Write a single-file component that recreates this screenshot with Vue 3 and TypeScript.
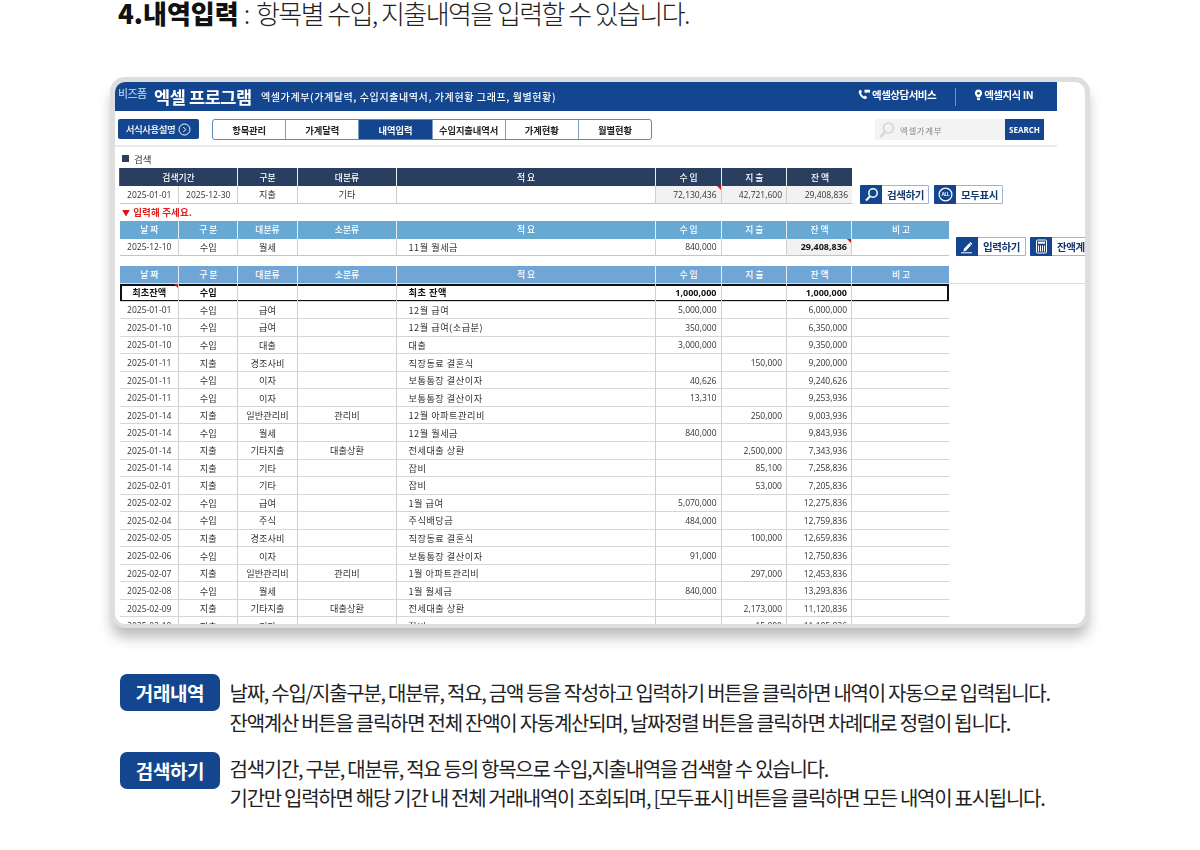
<script setup lang="ts">
interface Row { d: string; t: string; a: string; b: string; m: string; i: string; o: string; r: string }
const mk = (d: string, t: string, a: string, b: string, m: string, i: string, o: string, r: string): Row => ({ d, t, a, b, m, i, o, r })
const rows: Row[] = [
  mk('2025-01-01', '수입', '급여', '', '12월 급여', '5,000,000', '', '6,000,000'),
  mk('2025-01-10', '수입', '급여', '', '12월 급여(소급분)', '350,000', '', '6,350,000'),
  mk('2025-01-10', '수입', '대출', '', '대출', '3,000,000', '', '9,350,000'),
  mk('2025-01-11', '지출', '경조사비', '', '직장동료 결혼식', '', '150,000', '9,200,000'),
  mk('2025-01-11', '수입', '이자', '', '보통통장 결산이자', '40,626', '', '9,240,626'),
  mk('2025-01-11', '수입', '이자', '', '보통통장 결산이자', '13,310', '', '9,253,936'),
  mk('2025-01-14', '지출', '일반관리비', '관리비', '12월 아파트관리비', '', '250,000', '9,003,936'),
  mk('2025-01-14', '수입', '월세', '', '12월 월세금', '840,000', '', '9,843,936'),
  mk('2025-01-14', '지출', '기타지출', '대출상환', '전세대출 상환', '', '2,500,000', '7,343,936'),
  mk('2025-01-14', '지출', '기타', '', '잡비', '', '85,100', '7,258,836'),
  mk('2025-02-01', '지출', '기타', '', '잡비', '', '53,000', '7,205,836'),
  mk('2025-02-02', '수입', '급여', '', '1월 급여', '5,070,000', '', '12,275,836'),
  mk('2025-02-04', '수입', '주식', '', '주식배당금', '484,000', '', '12,759,836'),
  mk('2025-02-05', '지출', '경조사비', '', '직장동료 결혼식', '', '100,000', '12,659,836'),
  mk('2025-02-06', '수입', '이자', '', '보통통장 결산이자', '91,000', '', '12,750,836'),
  mk('2025-02-07', '지출', '일반관리비', '관리비', '1월 아파트관리비', '', '297,000', '12,453,836'),
  mk('2025-02-08', '수입', '월세', '', '1월 월세금', '840,000', '', '13,293,836'),
  mk('2025-02-09', '지출', '기타지출', '대출상환', '전세대출 상환', '', '2,173,000', '11,120,836'),
  mk('2025-02-10', '지출', '기타', '', '잡비', '', '15,000', '11,105,836'),
]
const tabs = ['항목관리', '가계달력', '내역입력', '수입지출내역서', '가계현황', '월별현황']
const heads = ['날 짜', '구 분', '대분류', '소분류', '적 요', '수 입', '지 출', '잔 액', '비 고']
</script>

<template>
  <div class="page">
    <h1 class="title"><b>4.내역입력</b> <span class="colon">:</span> 항목별 수입, 지출내역을 입력할 수 있습니다.</h1>

    <section class="frame">
      <header class="appbar">
        <div class="brand">
          <span class="logo">비즈폼</span>
          <strong class="appname">엑셀 프로그램</strong>
          <span class="sub">엑셀가계부(가계달력, 수입지출내역서, 가계현황 그래프, 월별현황)</span>
        </div>
        <div class="links">
          <span class="link">
            <svg width="13" height="12" viewBox="0 0 13 12"><path d="M1.200 1.400 3 .8l1 2.400-1 .9c.4 1.400 1.500 2.700 2.900 3.400l1-.9 2.200 1.300-.8 1.800c-.5.4-1.400.5-2.400.1C3.400 8.600 1.400 6.200.8 3.400c-.1-.8 0-1.500.4-2Z" fill="#fff"/><path d="M6.500.8H12v2.700H8.800L7.600 4.600V3.500H6.500Z" fill="#fff"/></svg>
            엑셀상담서비스
          </span>
          <i class="vsep"></i>
          <span class="link">
            <svg width="9" height="12" viewBox="0 0 9 12"><path d="M4.500.6a3.700 3.700 0 0 1 2.300 6.600c-.5.400-.6.800-.7 1.300H2.900c-.1-.5-.2-.9-.7-1.300A3.700 3.700 0 0 1 4.500.6Z" fill="#fff"/><circle cx="4.500" cy="4.300" r="1.300" fill="#14468f"/><rect x="3" y="9.200" width="3" height="1.900" fill="#fff"/></svg>
            엑셀지식 IN
          </span>
        </div>
      </header>

      <div class="toolbar">
        <button class="guide">서식사용설명
          <svg width="13" height="13" viewBox="0 0 13 13"><circle cx="6.500" cy="6.500" r="5.500" fill="none" stroke="#fff" stroke-width="1"/><path d="M5.300 4l2.500 2.500L5.300 9" fill="none" stroke="#fff" stroke-width="1"/></svg>
        </button>
        <nav class="tabs">
          <span v-for="t in tabs" :key="t" class="tab" :class="{ on: t === '내역입력' }">{{ t }}</span>
        </nav>
        <div class="search">
          <svg width="18" height="18" viewBox="0 0 18 18"><circle cx="10.500" cy="7" r="5" fill="none" stroke="#d4d4d4" stroke-width="1.600"/><path d="M7 11 2.500 16" stroke="#d4d4d4" stroke-width="2.200"/></svg>
          <span class="ph">엑셀가계부</span>
          <span class="sbtn">SEARCH</span>
        </div>
      </div>

      <div class="label"><i class="sq"></i>검색</div>

      <div class="band">
        <div class="sheet">
          <i class="cellmark"></i>
          <div class="g head dark g-s">
            <span class="c span2">검색기간</span><span class="c">구분</span><span class="c">대분류</span><span class="c">적 요</span><span class="c">수 입</span><span class="c">지 출</span><span class="c">잔 액</span>
          </div>
          <div class="g row g-s tall">
            <span class="c n">2025-01-01</span><span class="c n">2025-12-30</span><span class="c">지출</span><span class="c">기타</span><span class="c"></span>
            <span class="c n r grey tri">72,130,436</span><span class="c n r grey">42,721,600</span><span class="c n r grey">29,408,836</span>
          </div>
        </div>
        <div class="actions first">
          <span class="act">
            <b class="ico"><svg width="15" height="15" viewBox="0 0 15 15"><circle cx="9" cy="6" r="4.200" fill="none" stroke="#fff" stroke-width="1.500"/><path d="M6 9.200 2 13.500" stroke="#fff" stroke-width="2"/></svg></b>검색하기
          </span>
          <span class="act">
            <b class="ico"><svg width="15" height="15" viewBox="0 0 15 15"><circle cx="7.500" cy="7.500" r="6.400" fill="none" stroke="#fff" stroke-width="1.200"/><text x="7.500" y="9.200" text-anchor="middle" font-size="4.800" font-weight="700" fill="#fff" font-family="Liberation Sans, sans-serif">ALL</text></svg></b>모두표시
          </span>
        </div>
      </div>

      <div class="msg"><i class="down">▼</i> 입력해 주세요.</div>

      <div class="band">
        <div class="sheet">
          <div class="g head blue"><span v-for="h in heads" :key="h" class="c">{{ h }}</span></div>
          <div class="g row tall">
            <span class="c n">2025-12-10</span><span class="c">수입</span><span class="c">월세</span><span class="c"></span><span class="c l">11월 월세금</span>
            <span class="c n r">840,000</span><span class="c n r"></span><span class="c n r grey bold tri">29,408,836</span><span class="c"></span>
          </div>
        </div>
        <div class="actions second">
          <span class="act">
            <b class="ico"><svg width="15" height="15" viewBox="0 0 15 15"><path d="M4 9.800 10.300 3l2 1.800-6.300 6.900-2.700.7Z" fill="#fff"/><path d="M9.300 4.200l2 1.800" stroke="#14468f" stroke-width=".7"/><path d="M1 13.800h11" stroke="#fff" stroke-width="1"/></svg></b>입력하기
          </span>
          <span class="act wide">
            <b class="ico"><svg width="13" height="15" viewBox="0 0 13 15"><rect x="1.500" y="1" width="10" height="13" rx="1" fill="none" stroke="#fff" stroke-width="1"/><rect x="3" y="2.700" width="7" height="2" fill="#fff"/><path d="M3.500 6.500v6M5.500 6.500v6M7.500 6.500v6M9.500 6.500v6" stroke="#fff" stroke-width="1"/></svg></b>잔액계산
          </span>
        </div>
      </div>

      <div class="list">
        <div class="listhead"><div class="g head blue2"><span v-for="h in heads" :key="h" class="c">{{ h }}</span></div></div>
        <div class="g row first-row">
          <span class="c tri-date">최초잔액</span><span class="c">수입</span><span class="c"></span><span class="c"></span><span class="c l">최초 잔액</span>
          <span class="c n r">1,000,000</span><span class="c n r"></span><span class="c n r">1,000,000</span><span class="c"></span>
        </div>
        <div v-for="(x, k) in rows" :key="k" class="g row">
          <span class="c n">{{ x.d }}</span><span class="c">{{ x.t }}</span><span class="c">{{ x.a }}</span><span class="c">{{ x.b }}</span><span class="c l">{{ x.m }}</span>
          <span class="c n r">{{ x.i }}</span><span class="c n r">{{ x.o }}</span><span class="c n r">{{ x.r }}</span><span class="c"></span>
        </div>
      </div>
    </section>

    <section class="notes">
      <div class="note">
        <b class="pill">거래내역</b>
        <p>날짜, 수입/지출구분, 대분류, 적요, 금액 등을 작성하고 입력하기 버튼을 클릭하면 내역이 자동으로 입력됩니다.<br>잔액계산 버튼을 클릭하면 전체 잔액이 자동계산되며, 날짜정렬 버튼을 클릭하면 차례대로 정렬이 됩니다.</p>
      </div>
      <div class="note">
        <b class="pill">검색하기</b>
        <p>검색기간, 구분, 대분류, 적요 등의 항목으로 수입,지출내역을 검색할 수 있습니다.<br>기간만 입력하면 해당 기간 내 전체 거래내역이 조회되며, [모두표시] 버튼을 클릭하면 모든 내역이 표시됩니다.</p>
      </div>
    </section>
  </div>
</template>

<style scoped>
.page { width: 1200px; height: 850px; background: #fff; overflow: hidden; font-family: "Noto Sans CJK KR", sans-serif; color: #222; }
.title { margin: 0 0 0 118px; height: 77px; box-sizing: border-box; font-size: 26px; line-height: 26px; font-weight: 300; letter-spacing: -1.570px; color: #222; white-space: nowrap; }
.title b { font-weight: 900; color: #111; letter-spacing: 0; margin-right: 1px; }
.colon { margin-right: 3px; }

.frame { margin-left: 110px; width: 980px; height: 551px; box-sizing: border-box; border: 5px solid #dedede; border-bottom-width: 4px; border-radius: 15px; overflow: hidden; background: #fff; box-shadow: 0 11px 14px -2px rgba(0, 0, 0, .28); }
.frame > * { filter: blur(.3px); }

.appbar { width: 942px; height: 29px; background: #14468f; display: flex; justify-content: space-between; color: #fff; }
.brand { display: flex; align-items: center; }
.logo { margin: -7px 0 0 3px; width: 36px; font-size: 11px; font-weight: 500; letter-spacing: -.6px; color: #a8c4ea; white-space: nowrap; }
.appname { font-size: 17.500px; font-weight: 700; letter-spacing: -.4px; width: 107px; white-space: nowrap; }
.sub { font-size: 10px; font-weight: 500; letter-spacing: .6px; white-space: nowrap; }
.links { display: flex; align-items: center; padding-right: 24px; margin-top: -4px; font-size: 10.500px; font-weight: 700; letter-spacing: -.5px; }
.link { display: flex; align-items: center; }
.link svg { margin-right: 1px; }
.vsep { width: 1px; height: 18px; background: #6f91c2; margin: 5px 18px 0 19px; }

.toolbar { width: 942px; height: 36px; box-sizing: border-box; border-bottom: 2px solid #eaeaea; display: flex; padding: 8px 0 0 3px; }
.guide { width: 81px; height: 20px; padding: 0; border: 0; border-radius: 2px; background: #14468f; color: #fff; font: 500 9.500px "Noto Sans CJK KR", sans-serif; letter-spacing: -.5px; display: flex; align-items: center; justify-content: center; gap: 3px; }
.tabs { margin-left: 13px; width: 440px; height: 21px; box-sizing: border-box; border: 1px solid #5e88b5; border-radius: 3px; display: flex; overflow: hidden; }
.tab { flex: 1; display: flex; align-items: center; justify-content: center; border-right: 1px solid #7c9dc2; font-size: 9.300px; font-weight: 700; color: #222; white-space: nowrap; letter-spacing: -.1px; }
.tab:last-child { border-right: 0; }
.tab.on { background: #14468f; color: #fff; }
.search { margin-left: auto; margin-right: 13px; width: 169px; height: 21px; background: #f3f3f3; display: flex; align-items: center; padding-left: 3px; box-sizing: border-box; border-radius: 1px; }
.ph { margin-left: 4px; font-size: 8.500px; letter-spacing: .6px; color: #888; }
.sbtn { margin-left: auto; width: 39px; height: 21px; background: #14468f; color: #fff; font: 700 8px "Open Sans", sans-serif; display: flex; align-items: center; justify-content: center; }

.label { height: 21px; display: flex; align-items: center; padding: 2px 0 0 7px; box-sizing: border-box; font-size: 9.500px; color: #333; gap: 5px; }
.sq { width: 7px; height: 7px; background: #2a3f60; }

.band { display: flex; align-items: flex-end; padding-left: 4.500px; }
.sheet { position: relative; }
.cellmark { position: absolute; left: -1px; top: 0; width: 1.500px; height: 18px; background: #1e7a46; }

.g { display: grid; width: max-content; grid-template-columns: 59.500px 58.500px 60px 99px 259px 66px 65.500px 65px 97px; }
.g.g-s { grid-template-columns: 59.500px 58.500px 60px 99px 259px 66px 65.500px 65px; }
.span2 { grid-column: span 2; }
.head { height: 17.500px; color: #fff; font-size: 8.800px; font-weight: 500; }
.head .c { border-right: 1px solid #e6eef5; border-bottom: 0; }
.head .c:last-child { border-right: 0; }
.dark { background: #2a3f60; height: 18px; }
.blue { background: #68a9d3; }
.blue2 { background: #70a6d5; height: 16.500px; }
.c { display: flex; align-items: center; justify-content: center; box-sizing: border-box; padding-left: 1px; border-right: 1px solid #cfcfcf; white-space: nowrap; overflow: hidden; min-width: 0; position: relative; }
.row { height: 17.550px; font-size: 9.200px; color: #333; }
.row .c { border-bottom: 1px solid #d6d6d6; }
.row .c:last-child { border-right: 0; }
.tall .c { border-bottom: 1.500px solid #c4c4c4; }
.n { font-family: "Open Sans", sans-serif; font-size: 8.500px; }
.r { justify-content: flex-end; padding-right: 4px; }
.l { justify-content: flex-start; padding-left: 12px; letter-spacing: .5px; }
.grey { background: #f2f2f2; }
.bold { font-weight: 700; color: #111; font-size: 9px; }
.tri::after, .tri-date::after { content: ""; position: absolute; right: 0; top: 0; border-top: 4px solid #e01010; border-left: 4px solid transparent; }

.actions { display: flex; }
.act { height: 19px; box-sizing: border-box; border: 1px solid #9db5d4; border-radius: 1px; display: flex; align-items: center; font-size: 10.500px; font-weight: 700; color: #17386b; letter-spacing: -.4px; white-space: nowrap; background: #fff; flex: none; }
.ico { width: 22px; height: 19px; margin: 0 5px 0 -1px; background: #14468f; display: flex; align-items: center; justify-content: center; border-radius: 1px 0 0 1px; flex: none; }
.first { gap: 5px; padding: 0 0 0 8px; }
.first .act { width: 69px; }
.second { gap: 4px; padding-left: 7px; }
.second .act { width: 70px; }
.second .act.wide { width: 72px; }

.msg { height: 17.500px; display: flex; align-items: center; padding-left: 7px; font-size: 9.500px; font-weight: 700; letter-spacing: .15px; color: #e01b1b; gap: 3px; }
.down { font-style: normal; font-size: 8px; color: #d81414; }

.list { margin-top: 10px; padding-left: 4.500px; }
.listhead { border-bottom: 1px solid #dcdcdc; width: 965px; }
.first-row { height: 18px; box-sizing: border-box; outline: 2px solid #111; outline-offset: -2px; font-weight: 700; color: #111; position: relative; }
.first-row .n { font-weight: 700; font-size: 9px; }

.notes { margin: 46px 0 0 120px; }
.note { display: flex; height: 78px; }
.pill { width: 100px; height: 37px; flex: none; border-radius: 7px; background: #14468f; color: #fff; font-size: 19px; font-weight: 700; letter-spacing: -.4px; display: flex; align-items: center; justify-content: center; }
.note p { margin: 4px 0 0 9.500px; font-size: 20px; line-height: 30px; font-weight: 400; letter-spacing: -1.270px; color: #222; white-space: nowrap; }
.note:last-child p { margin-top: 2px; line-height: 29px; }
</style>
